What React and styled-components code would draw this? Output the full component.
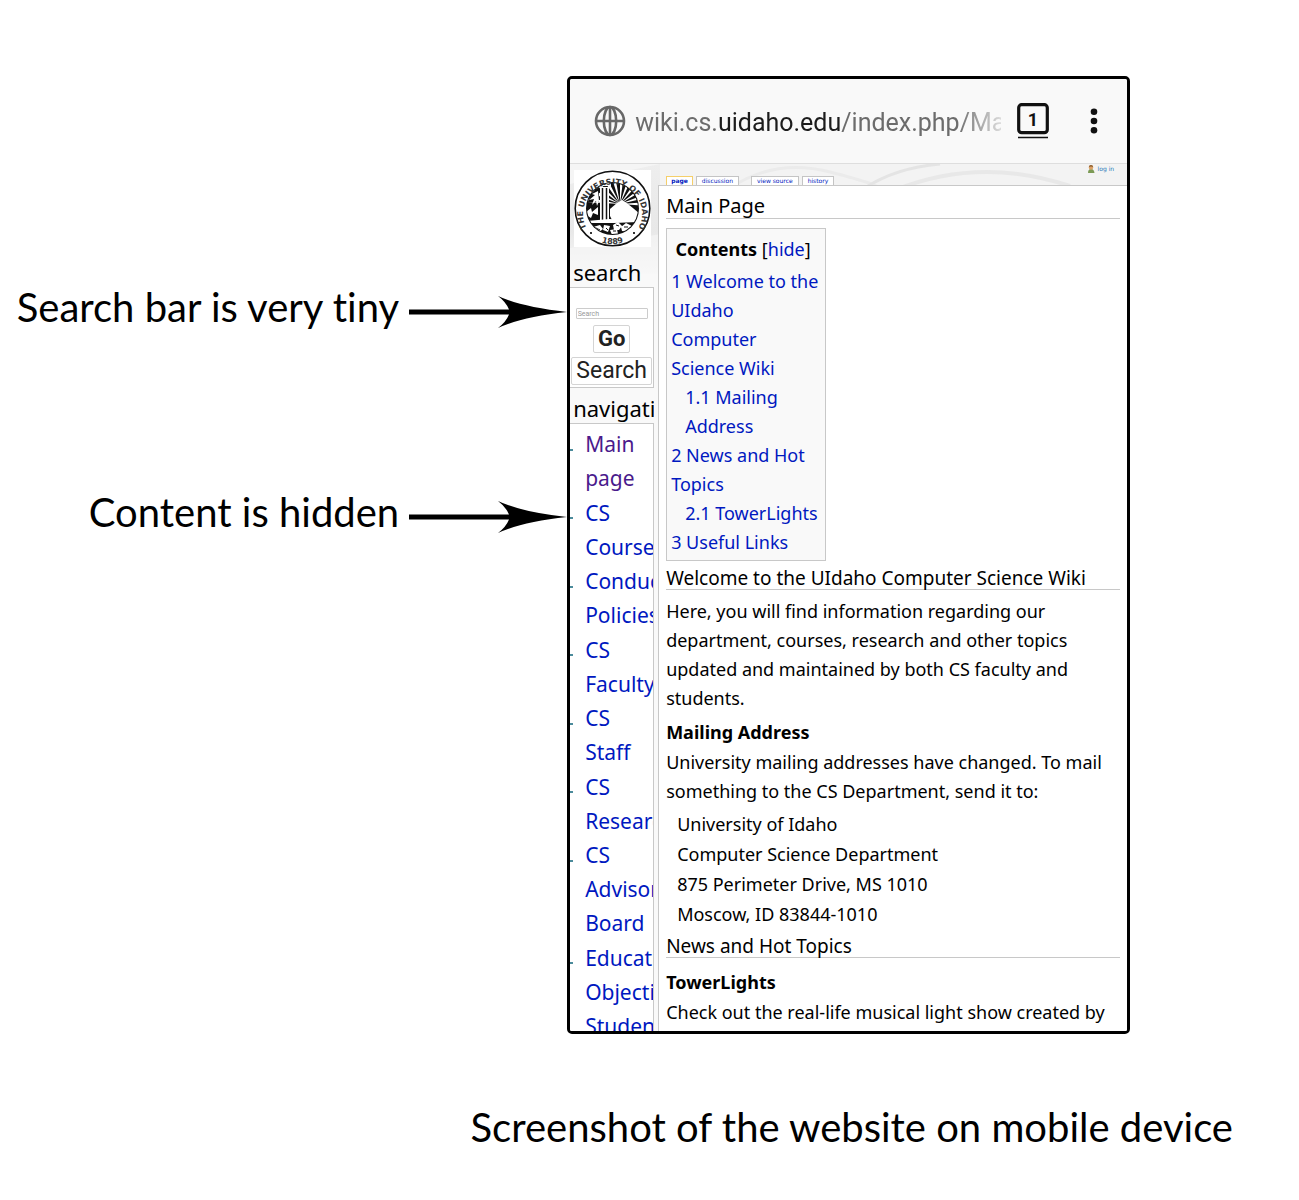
import React from "react";
import styled, { createGlobalStyle } from "styled-components";

const GlobalStyle = createGlobalStyle`
  *, *::before, *::after { box-sizing: border-box; }
  body { margin: 0; background: #fff; color: #000; }
  h1, h2, h3, p, ul, ol, dl, dd, figure { margin: 0; padding: 0; font-weight: 400; }
  ul, ol { list-style: none; }
  button, input { font: inherit; margin: 0; }
`;

const wikiFont = `"Noto Sans", "Open Sans", sans-serif`;
const captionFont = `Lato, "Noto Sans", sans-serif`;
const link = "#0018c0";
const rule = "#c8c8c8";

const Figure = styled.figure`
  padding: 76px 0 40px;
`;

const Stage = styled.div`
  display: flex;
  align-items: flex-start;
  padding-right: 13%;
`;

const Notes = styled.div`
  flex: 1 1 0;
  min-width: 0;
  padding-top: 199px;
  display: flex;
  flex-direction: column;
  align-items: flex-end;
  gap: 131px;
`;

const Note = styled.p`
  display: flex;
  align-items: center;
  gap: 10px;
  white-space: nowrap;
  font: 40px/64px ${captionFont};
  font-variant-ligatures: none;
`;

const NoteText = styled.span`
  padding-bottom: 10px;
`;

const Caption = styled.figcaption`
  padding: 61px 66px 0 0;
  text-align: right;
  font: 40px/64px ${captionFont};
`;

const Device = styled.main`
  flex: 0 1 563px;
  aspect-ratio: 563 / 958;
  overflow: hidden;
  display: flex;
  flex-direction: column;
  border: 3px solid #000;
  border-radius: 5px;
  background: #fff;
`;

const Toolbar = styled.header`
  flex: none;
  height: 85px;
  display: flex;
  align-items: center;
  padding: 0 28px 0 24px;
  background: #f9f9f9;
  border-bottom: 1px solid #dedede;
`;

const Address = styled.div`
  flex: 1;
  min-width: 0;
  margin-left: 9px;
  padding-top: 3px;
  overflow: hidden;
  white-space: nowrap;
  font: 25px/32px Roboto, sans-serif;
  color: #6c6c6c;
  mask-image: linear-gradient(90deg, #000 88%, transparent 103%);
  b { font-weight: 400; color: #1c1c1c; }
`;

const IconButton = styled.button`
  flex: none;
  display: flex;
  padding: 0;
  border: 0;
  background: none;
  margin-left: ${(p) => p.$gap}px;
`;

const Wiki = styled.div`
  position: relative;
  flex: 1;
  min-height: 0;
  display: flex;
  align-items: flex-start;
  background: #f9f9f9;
  font-family: ${wikiFont};
`;

const Swoosh = styled.svg`
  position: absolute;
  inset: 0 0 auto 0;
  width: 100%;
  height: 110px;
`;

const Sidebar = styled.aside`
  position: relative;
  flex: none;
  width: 84px;
  margin-right: 4px;
  padding-top: 6px;
`;

const Logo = styled.a`
  display: block;
  width: 77px;
  height: 77px;
  margin-left: 4px;
  background: #fff;
  svg { display: block; }
`;

const SideHeading = styled.h2`
  display: block;
  padding-left: 3px;
  overflow: hidden;
  font-size: 22px;
  line-height: 28px;
  height: ${(p) => p.$height}px;
  padding-top: ${(p) => p.$top}px;
`;

const SideBox = styled.div`
  border: 1px solid ${rule};
  border-left: 0;
  background: #fff;
  overflow: hidden;
`;

const SearchForm = styled.form`
  display: flex;
  flex-direction: column;
  align-items: center;
  height: 99px;
  padding-top: 20px;
`;

const SearchInput = styled.input`
  width: 72px;
  height: 11px;
  padding: 0 1px;
  border: 1px solid #ccc;
  border-radius: 1px;
  font: 7px/9px Roboto, sans-serif;
  background: #fff;
  &::placeholder { color: #999; }
`;

const SearchButton = styled.button`
  height: 28px;
  padding: 0 4px;
  margin-top: ${(p) => p.$gap}px;
  border: 1px solid #d4d4d4;
  border-radius: 2px;
  background: #fff;
  color: #222;
  font: ${(p) => (p.$strong ? "700 22px" : "400 23px")}/26px Roboto, sans-serif;
`;

const NavList = styled.ul`
  padding-top: 3px;
  font-size: 21px;
  line-height: 34px;
  white-space: nowrap;
  li {
    position: relative;
    padding-left: 15px;
  }
  li:nth-child(even) { padding-top: 1px; }
  li::before {
    content: "";
    position: absolute;
    left: 0;
    top: 22px;
    width: 3px;
    height: 2px;
    background: #4b8b9b;
  }
`;

const Link = styled.a`
  color: ${(p) => (p.$visited ? "#4a1a8c" : link)};
  text-decoration: none;
`;

const Column = styled.div`
  position: relative;
  flex: 1;
  min-width: 0;
`;

const TopRow = styled.nav`
  display: flex;
  align-items: flex-end;
  height: 21px;
  padding: 0 13px 0 8px;
  font: 6px/8px "DejaVu Sans", sans-serif;
`;

const Tab = styled.a`
  height: 9px;
  padding: 0 ${(p) => (p.$active ? 4 : 5)}px;
  margin-right: ${(p) => (p.$wide ? 12 : 3)}px;
  border: 1px solid ${(p) => (p.$active ? "#f5cf6a" : "#c4c4c4")};
  border-bottom: 0;
  background: #fff;
  color: ${link};
  font-weight: ${(p) => (p.$active ? 700 : 400)};
  text-decoration: none;
  white-space: nowrap;
`;

const Login = styled.a`
  display: flex;
  align-items: center;
  gap: 3px;
  align-self: flex-start;
  margin-left: auto;
  color: #2a7ab8;
  text-decoration: none;
  white-space: nowrap;
`;

const Article = styled.article`
  padding: 8px 7px 0;
  height: 900px;
  border: 1px solid ${rule};
  border-right: 0;
  background: #fff;
  font-size: 18px;
  line-height: 29px;
  white-space: nowrap;
`;

const Title = styled.h1`
  border-bottom: 1px solid ${rule};
  font-size: 20px;
  line-height: 24px;
  margin-bottom: 9px;
`;

const Toc = styled.section`
  width: 160px;
  padding: 6px 4px 3px;
  border: 1px solid ${rule};
  background: #f9f9f9;
`;

const TocTitle = styled.h2`
  padding-right: 6px;
  text-align: center;
  margin-bottom: 3px;
  font-size: 18px;
  line-height: 29px;
  b { font-weight: 700; }
`;

const TocItem = styled.li`
  padding-left: ${(p) => (p.$sub ? 14 : 0)}px;
`;

const Section = styled.h2`
  border-bottom: 1px solid ${rule};
  padding-top: 6px;
  margin-bottom: 7px;
  font-size: 19px;
  line-height: 22px;
`;

const SubSection = styled.h3`
  font-size: 18px;
  line-height: 29px;
  font-weight: 700;
  margin-top: ${(p) => p.$gap}px;
  margin-bottom: 1px;
`;

const PostalAddress = styled.address`
  padding: 3px 0 0 11px;
  font-style: normal;
  line-height: 30px;
`;

const Arrow = () => (
  <svg width="158" height="34" viewBox="0 0 158 34" aria-hidden="true">
    <path d="M0 14.5H100Q97 7 89 1Q112 12 158 17Q112 22 89 33Q97 27 100 19.5H0Z" />
  </svg>
);

const Globe = () => (
  <svg width="32" height="32" viewBox="0 0 32 32" fill="none" stroke="#686868" strokeWidth="2.6" aria-hidden="true">
    <circle cx="16" cy="16" r="14" />
    <ellipse cx="16" cy="16" rx="6.2" ry="14" />
    <path d="M16 2v28M2 16h28" />
  </svg>
);

const rays = Array.from({ length: 11 }, (_, i) => {
  const a = Math.PI * (1.02 + i * 0.096);
  const at = (t) => `${(46 + 40 * Math.cos(t)).toFixed(1)} ${(34 + 40 * Math.sin(t)).toFixed(1)}`;
  return `M46 34L${at(a)}L${at(a + 0.13)}Z`;
}).join("");

const Seal = () => (
  <svg width="77" height="77" viewBox="0 0 77 77" role="img" aria-label="University of Idaho seal">
    <defs>
      <path id="sealTop" d="M14 60.300A29.500 29.500 0 1 1 63 60.300" />
      <path id="sealBottom" d="M20 69A35.500 35.500 0 0 0 57 69" />
      <clipPath id="sealClip"><circle cx="38.5" cy="38.5" r="25.5" /></clipPath>
    </defs>
    <circle cx="38.5" cy="38.5" r="37.3" fill="#fff" stroke="#111" strokeWidth="1.6" />
    <circle cx="38.5" cy="38.5" r="26.5" fill="#111" />
    <g clipPath="url(#sealClip)">
      <path d={rays} fill="#fff" />
      <path d="M36 46L36 39L43 33L48 30L54 34L66 44V50H38Z" fill="#fff" />
      <path d="M12 14H25V32H12Z" fill="#111" />
      <path d="M26 17h9v34H26zM23 13h14v3H23z" fill="#fff" />
      <path d="M28.5 18v32M32.5 18v32" stroke="#111" strokeWidth="1.5" />
      <path d="M24 21l-6 3 3 1-6 5 5-1-2 6 4-4 1 5 2-5zM12 42l5-4 1 4 6-5v8l-5-2-2 5-5-3Z" fill="#fff" />
      <path d="M13 51l22-2 30 1v2L40 53H13z" fill="#fff" />
      <path d="M19 57l7-2 3 4-5 4zM30 55l6 1-2 6-5-2zM39 55l5-3 4 4-3 4-5 0zM47 57l5-4 6 3-4 6-6-1zM36 60l7-1 1 5-6 1z" fill="#fff" />
      <path d="M22 58l4 2M32 58l2 2M42 55l3 1M50 57l4 0M39 61l3 0" stroke="#111" />
    </g>
    <text fontFamily="DejaVu Sans" fontSize="8" fontWeight="700" fill="#333">
      <textPath href="#sealTop" startOffset="50%" textAnchor="middle">THE UNIVERSITY OF IDAHO</textPath>
    </text>
    <text fontFamily="DejaVu Sans" fontSize="8" fontWeight="700" fill="#333">
      <textPath href="#sealBottom" startOffset="50%" textAnchor="middle">1889</textPath>
    </text>
    <circle cx="17" cy="63" r="1.1" />
    <circle cx="60" cy="63" r="1.1" />
  </svg>
);

const HeaderArt = () => (
  <Swoosh viewBox="0 0 557 110" preserveAspectRatio="none" aria-hidden="true">
    <defs>
      <linearGradient id="fade" x1="0" y1="0" x2="0" y2="1">
        <stop offset="0" stopColor="#eeeeee" />
        <stop offset=".6" stopColor="#e8e8e8" />
        <stop offset="1" stopColor="#f9f9f9" />
      </linearGradient>
    </defs>
    <path d="M0 0H557V110H0Z" fill="#f3f3f3" />
    <path d="M0 0H90V110H0Z" fill="url(#fade)" />
    <path d="M0 20Q50 8 90 0H0Z" fill="#f5f5f5" />
    <path d="M0 84Q50 78 90 70V110H0Z" fill="#f7f7f7" opacity=".6" />
    <g fill="none">
      <path d="M160 24Q205 -6 260 8T310 26" stroke="#ebebeb" strokeWidth="3" />
      <path d="M295 24Q325 4 370 0" stroke="#e4e4e4" strokeWidth="3" />
      <path d="M325 26Q410 -8 500 22" stroke="#e8e8e8" strokeWidth="4" />
    </g>
  </Swoosh>
);

const navItems = [
  ["Main", "page"],
  ["CS", "Courses"],
  ["Conduct", "Policies"],
  ["CS", "Faculty"],
  ["CS", "Staff"],
  ["CS", "Research"],
  ["CS", "Advisory", "Board"],
  ["Educational", "Objectives"],
  ["Student"],
];

const tocItems = [
  { lines: ["1 Welcome to the", "UIdaho", "Computer", "Science Wiki"] },
  { lines: ["1.1 Mailing", "Address"], sub: true },
  { lines: ["2 News and Hot", "Topics"] },
  { lines: ["2.1 TowerLights"], sub: true },
  { lines: ["3 Useful Links"] },
];

const Lines = ({ of }) =>
  of.map((line, i) => (
    <React.Fragment key={line}>
      {i > 0 && <br />}
      {line}
    </React.Fragment>
  ));

export default function App() {
  return (
    <Figure>
      <GlobalStyle />
      <Stage>
        <Notes>
          <Note><NoteText>Search bar is very tiny</NoteText><Arrow /></Note>
          <Note><NoteText>Content is hidden</NoteText><Arrow /></Note>
        </Notes>
        <Device>
          <Toolbar>
            <Globe />
            <Address>wiki.cs.<b>uidaho.edu</b>/index.php/Ma</Address>
            <IconButton $gap={16} aria-label="Open tabs">
              <svg width="32" height="36" viewBox="0 0 32 36" aria-hidden="true">
                <rect x="1.7" y="1.7" width="28.6" height="28" rx="3" fill="none" stroke="#111" strokeWidth="3.2" />
                <path d="M1 34.5h30" stroke="#111" strokeWidth="1.5" />
                <text x="16" y="22.5" textAnchor="middle" fontFamily="Roboto" fontSize="18" fontWeight="700" fill="#111">1</text>
              </svg>
            </IconButton>
            <IconButton $gap={40} aria-label="Menu">
              <svg width="10" height="26" viewBox="0 0 10 26" fill="#111" aria-hidden="true">
                <circle cx="5" cy="3.7" r="3.3" />
                <circle cx="5" cy="13" r="3.3" />
                <circle cx="5" cy="22.3" r="3.3" />
              </svg>
            </IconButton>
          </Toolbar>
          <Wiki>
            <HeaderArt />
            <Sidebar>
              <Logo href="#main"><Seal /></Logo>
              <SideHeading as="label" htmlFor="search" $top={11} $height={40}>search</SideHeading>
              <SideBox>
                <SearchForm>
                  <SearchInput id="search" placeholder="Search" />
                  <SearchButton type="button" $strong $gap={6}>Go</SearchButton>
                  <SearchButton type="button" $gap={4}>Search</SearchButton>
                </SearchForm>
              </SideBox>
              <SideHeading $top={6} $height={35}>navigation</SideHeading>
              <SideBox>
                <NavList>
                  {navItems.map((lines, i) => (
                    <li key={i}><Link href="#nav" $visited={i === 0}><Lines of={lines} /></Link></li>
                  ))}
                </NavList>
              </SideBox>
            </Sidebar>
            <Column>
              <TopRow>
                <Tab href="#page" $active>page</Tab>
                <Tab href="#discussion" $wide>discussion</Tab>
                <Tab href="#source">view source</Tab>
                <Tab href="#history">history</Tab>
                <Login href="#login">
                  <svg width="8" height="10" viewBox="0 0 8 10" aria-hidden="true">
                    <path d="M1 9Q1 5 4 5T7.5 9Z" fill="#7c9a55" />
                    <circle cx="4" cy="3.5" r="2.2" fill="#dba066" />
                    <path d="M1.8 3Q2 1 4 1T6.2 3Q4 2 1.8 3Z" fill="#8a5a2a" />
                  </svg>
                  log in
                </Login>
              </TopRow>
              <Article>
                <Title>Main Page</Title>
                <Toc>
                  <TocTitle><b>Contents</b> [<Link href="#toc">hide</Link>]</TocTitle>
                  <ul>
                    {tocItems.map((item) => (
                      <TocItem key={item.lines[0]} $sub={item.sub}>
                        <Link href="#section"><Lines of={item.lines} /></Link>
                      </TocItem>
                    ))}
                  </ul>
                </Toc>
                <Section>Welcome to the UIdaho Computer Science Wiki</Section>
                <p><Lines of={["Here, you will find information regarding our", "department, courses, research and other topics", "updated and maintained by both CS faculty and", "students."]} /></p>
                <SubSection $gap={5}>Mailing Address</SubSection>
                <p><Lines of={["University mailing addresses have changed. To mail", "something to the CS Department, send it to:"]} /></p>
                <PostalAddress><Lines of={["University of Idaho", "Computer Science Department", "875 Perimeter Drive, MS 1010", "Moscow, ID 83844-1010"]} /></PostalAddress>
                <Section>News and Hot Topics</Section>
                <SubSection $gap={10}>TowerLights</SubSection>
                <p>Check out the real-life musical light show created by</p>
              </Article>
            </Column>
          </Wiki>
        </Device>
      </Stage>
      <Caption>Screenshot of the website on mobile device</Caption>
    </Figure>
  );
}
